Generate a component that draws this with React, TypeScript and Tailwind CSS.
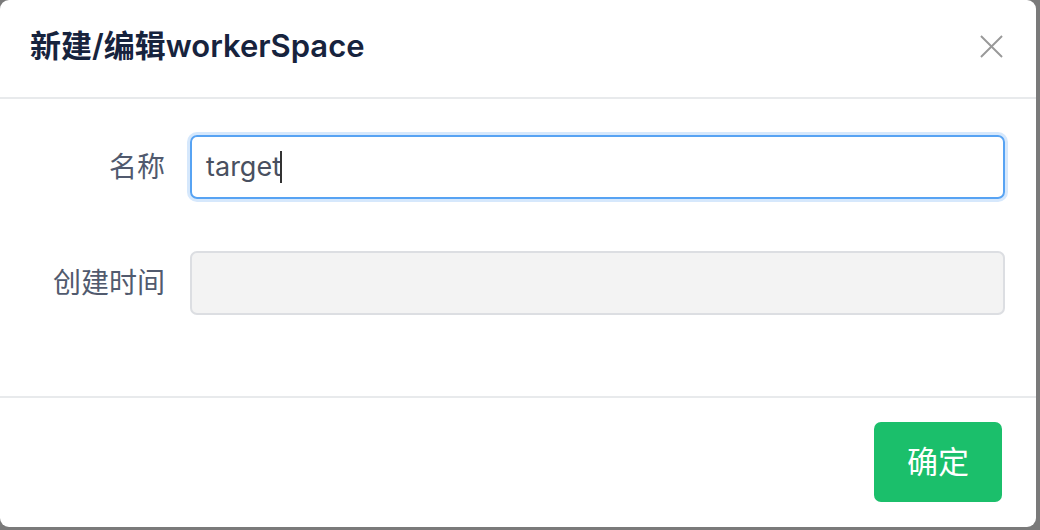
const font = { fontFamily: '"Helvetica Neue", Inter, "Noto Sans CJK SC", sans-serif' };

export default function App() {
  return (
    <div className="w-[1040px] h-[530px] bg-[#7a7a7a]" style={font}>
      <div className="w-[1036px] h-[527px] bg-white rounded-[9px] flex flex-col overflow-hidden">
        {/* Header */}
        <div className="h-[99px] shrink-0 flex items-center justify-between pl-[30px] pr-[33px] border-b-2 border-[#e8eaec]">
          <h2 className="text-[31px] font-semibold text-[#17233d] mt-[-4px]">
            新建/编辑workerSpace
          </h2>
          <button className="text-[#999999] mt-[-4px]">
            <svg width="23" height="23" viewBox="0 0 24 24" fill="none" stroke="currentColor" strokeWidth="2">
              <path d="M1 1L23 23M23 1L1 23" />
            </svg>
          </button>
        </div>

        {/* Body */}
        <div className="flex-1 flex flex-col gap-[52px] pt-[36px] pr-[31px]">
          <div className="flex items-center">
            <label className="w-[165px] text-right text-[28px] text-[#515a6e]">
              名称
            </label>
            <div className="ml-[25px] flex-1 h-[64px] rounded-[7px] border-2 border-[#57a3f3] ring-[3px] ring-[#d6e8fc] flex items-center px-[14px]">
              <span className="text-[27px] text-[#495060]">target</span>
              <span className="w-[2px] h-[32px] bg-[#333] ml-[-1px]" />
            </div>
          </div>
          <div className="flex items-center">
            <label className="w-[165px] text-right text-[28px] text-[#515a6e]">
              创建时间
            </label>
            <div className="ml-[25px] flex-1 h-[64px] rounded-[7px] border-2 border-[#dcdee2] bg-[#f3f3f3]" />
          </div>
        </div>

        {/* Footer */}
        <div className="h-[131px] shrink-0 border-t-2 border-[#e8eaec] flex items-start justify-end pt-[24px] pr-[34px]">
          <button className="w-[128px] h-[80px] rounded-[7px] bg-[#1bbf6b] text-white text-[31px]">
            确定
          </button>
        </div>
      </div>
    </div>
  );
}
